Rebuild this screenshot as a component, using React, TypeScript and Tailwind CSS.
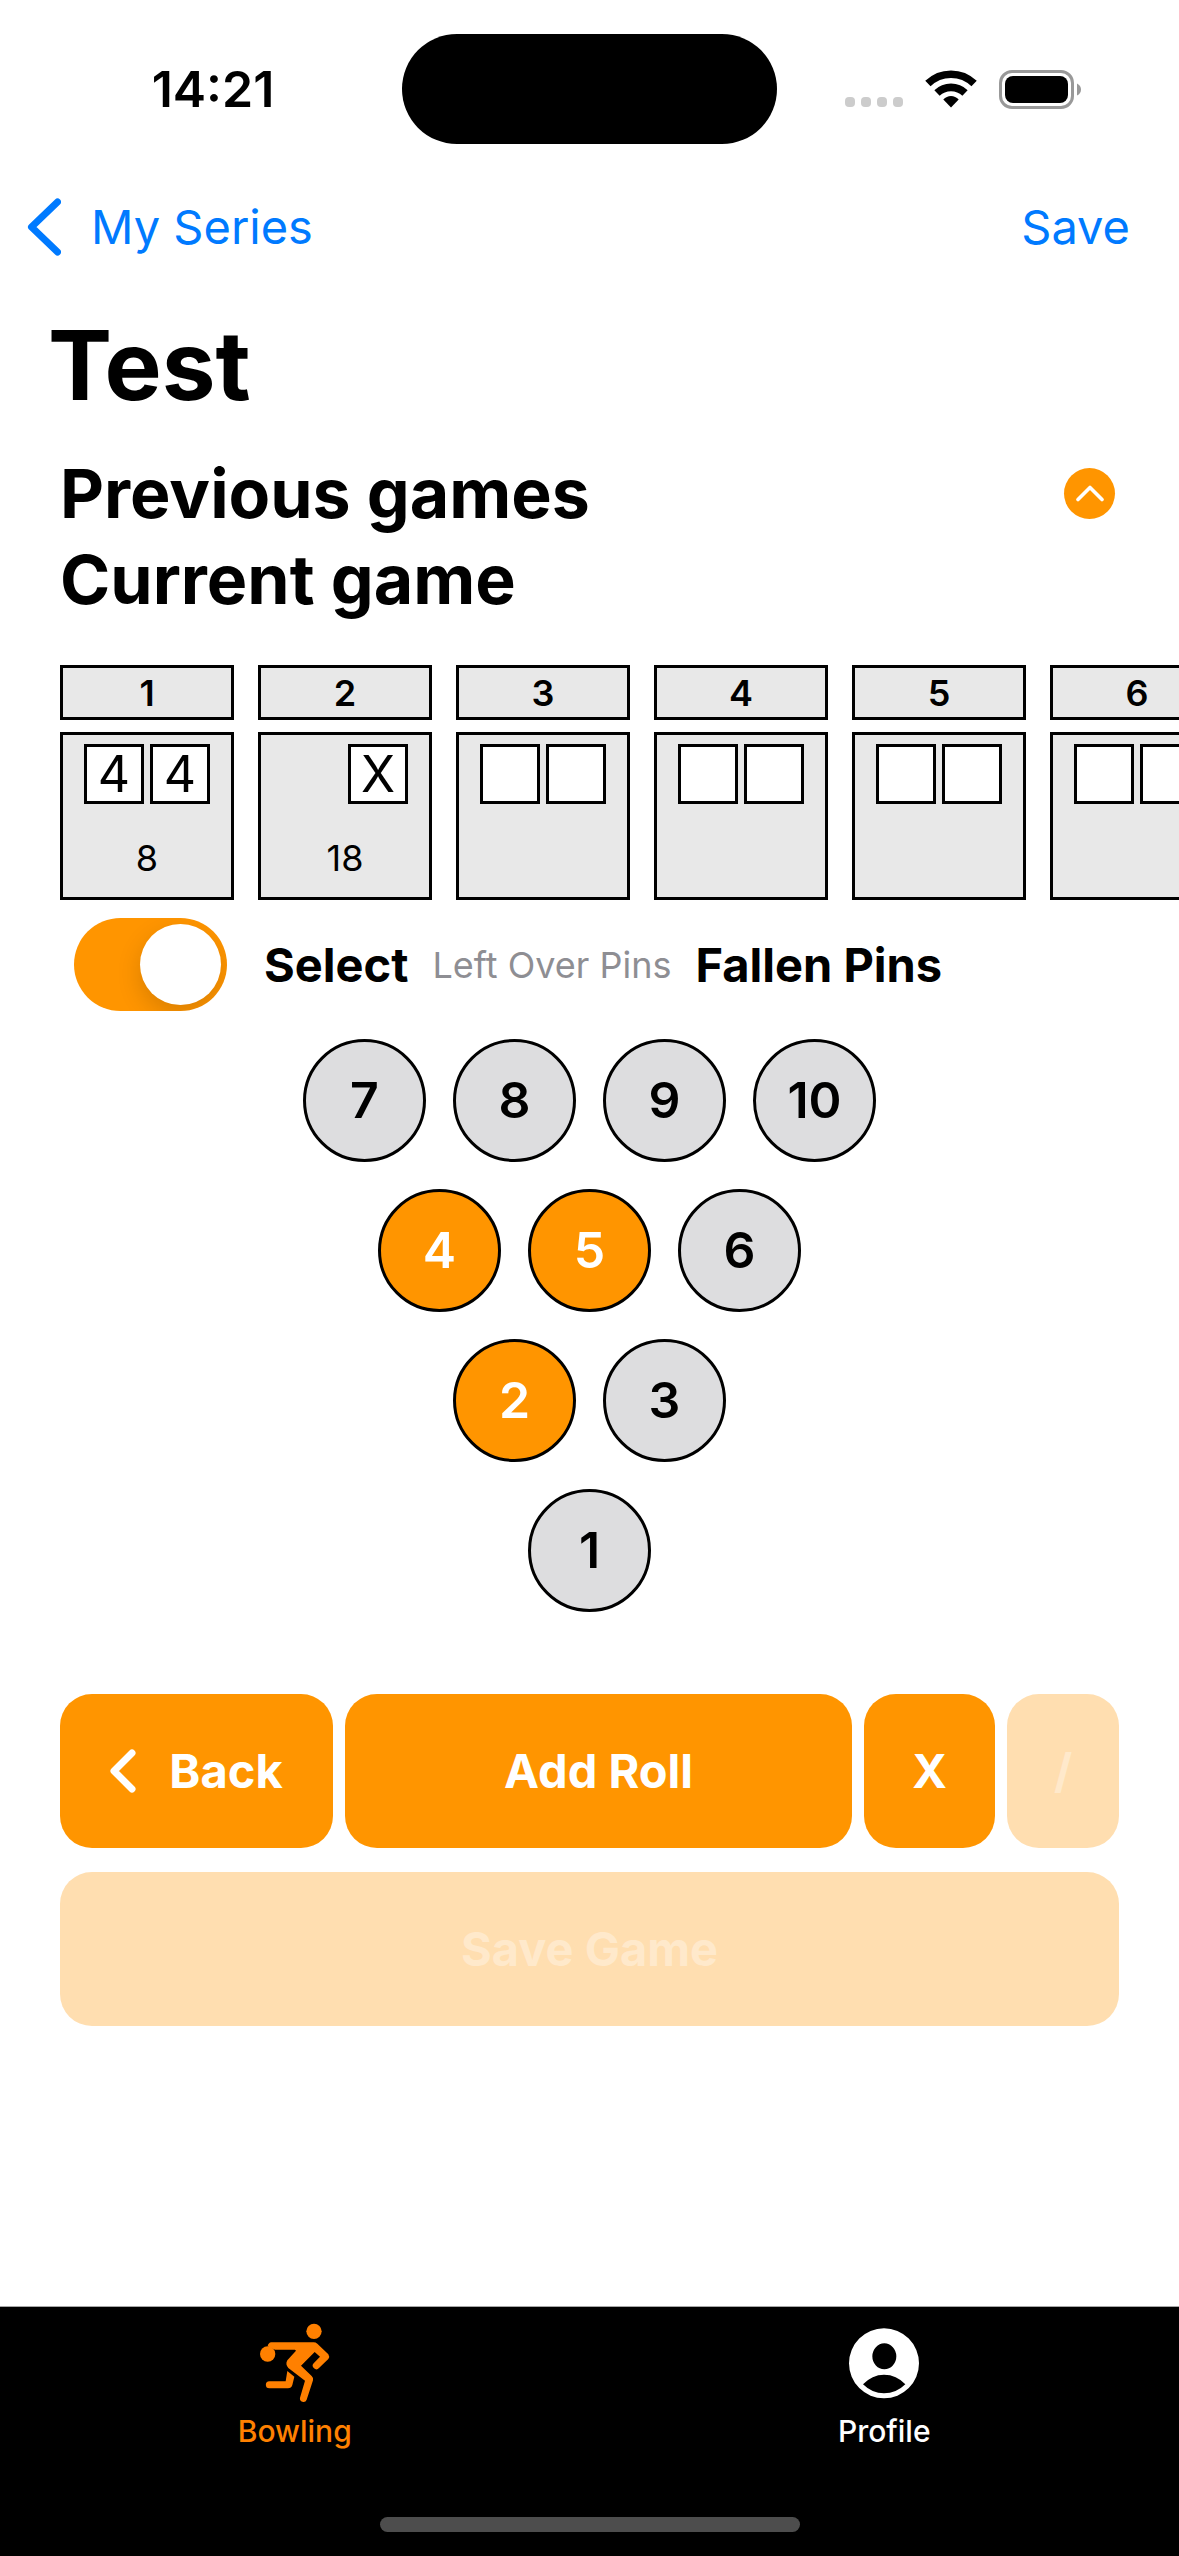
import { useState } from "react";

type Frame = { rolls: (string | null)[]; score: string };

const frames: Frame[] = [
  { rolls: ["4", "4"], score: "8" },
  { rolls: [null, "X"], score: "18" },
  { rolls: ["", ""], score: "" },
  { rolls: ["", ""], score: "" },
  { rolls: ["", ""], score: "" },
  { rolls: ["", ""], score: "" },
];

const pinRows = [[7, 8, 9, 10], [4, 5, 6], [2, 3], [1]];

function WifiIcon() {
  return (
    <svg viewBox="0 0 52 38" className="h-[38px] w-[52px]" fill="none" stroke="#000" strokeWidth="7.6" aria-hidden="true">
      <path d="M2.9 13.6A33.2 33.2 0 0 1 49.1 13.6" />
      <path d="M12 23A20.2 20.2 0 0 1 40 23" />
      <path d="M26 37.5L18.3 29.6Q21.6 26 26 26Q30.4 26 33.7 29.6Z" fill="#000" stroke="none" />
    </svg>
  );
}

function BatteryIcon() {
  return (
    <svg viewBox="0 0 82 39" className="h-[39px] w-[82px]" aria-hidden="true">
      <rect x="1.5" y="1.5" width="72" height="36" rx="11.5" fill="none" stroke="#999" strokeWidth="3" />
      <rect x="6" y="6" width="63" height="27" rx="8" fill="#000" />
      <path d="M78 13.5Q82 15.500 82 19.500Q82 23.500 78 25.500Z" fill="#999" />
    </svg>
  );
}

function StatusBar() {
  return (
    <div className="grid grid-cols-[1fr_375px_1fr] items-center pt-[34px]">
      <div className="pl-6 text-center text-[50px] leading-[60px] font-semibold">14:21</div>
      <div className="h-[110px] rounded-full bg-black" />
      <div className="flex items-center justify-end gap-[22px] pr-[98px]">
        <div className="mt-[26px] flex gap-[6px]">
          {[0, 1, 2, 3].map((n) => (
            <span key={n} className="size-[10px] rounded-[4px] bg-[#cccccc]" />
          ))}
        </div>
        <WifiIcon />
        <BatteryIcon />
      </div>
    </div>
  );
}

function NavBar() {
  return (
    <nav className="flex h-[166px] items-center justify-between pr-[49px] pl-[27px] text-[47px] leading-[60px] text-[#007aff]">
      <a href="#series" className="flex items-center gap-[30px]">
        <svg viewBox="0 0 34 58" className="h-[58px] w-[34px]" fill="none" stroke="currentColor" strokeWidth="7" strokeLinecap="round" strokeLinejoin="round" aria-hidden="true">
          <path d="M30.500 4L4.500 29L30.500 54" />
        </svg>
        My Series
      </a>
      <button type="button">Save</button>
    </nav>
  );
}

function FrameCard({ frame, number }: { frame: Frame; number: number }) {
  return (
    <li className="flex w-[174px] shrink-0 flex-col gap-3 text-center">
      <div className="flex h-[55px] items-center justify-center border-3 border-black bg-[#e8e8e8] text-[36px] font-semibold">
        {number}
      </div>
      <div className="flex h-[168px] flex-col border-3 border-black bg-[#e8e8e8] pt-[9px]">
        <div className="flex justify-center gap-[6px]">
          {frame.rolls.map((roll, i) =>
            roll === null ? (
              <span key={i} className="size-[60px]" />
            ) : (
              <span key={i} className="flex size-[60px] items-center justify-center border-3 border-black bg-white text-[50px] leading-none">
                {roll}
              </span>
            ),
          )}
        </div>
        <span className="mt-[30px] text-[36px] leading-[48px]">{frame.score}</span>
      </div>
    </li>
  );
}

function BowlerIcon() {
  return (
    <svg viewBox="180 98 216 240" className="h-[80px] w-[72px]" fill="currentColor" aria-hidden="true">
      <circle cx="345" cy="123" r="23" />
      <circle cx="206" cy="191" r="23" />
      <path d="M217 156H344Q350 156 355 160L388 192Q393 199 388 206L360 233A10.500 10.500 0 0 1 344 219L363 199L347 185L306 226L338 257Q344 262 342 270L323 328A10.500 10.500 0 0 1 303 322L318 271L268 233Q258 222 265 210L291 181L288 178H228L206 168Q208 157 217 156Z" />
      <path d="M265 242L260 273H211A10.500 10.500 0 0 0 211 294H267Q277 294 280 284L286 259Z" />
    </svg>
  );
}

function ProfileIcon() {
  return (
    <svg viewBox="203 98 216 240" className="h-[80px] w-[72px]" fill="currentColor" fillRule="evenodd" aria-hidden="true">
      <path d="M206 219a105 105 0 1 0 210 0a105 105 0 1 0 -210 0ZM276 198a36 39 0 1 1 72 0a36 39 0 1 1 -72 0ZM248 282Q275 253 311 253Q349 253 375 282Q348 309 311 309Q275 309 248 282Z" />
    </svg>
  );
}

const actionButton =
  "flex h-[154px] items-center justify-center rounded-[32px] bg-[#ff9500] text-[47px] font-bold text-white disabled:bg-[#ffdeb0] disabled:text-[#ffe9cb]";

export default function App() {
  const [fallen, setFallen] = useState(true);
  const [selected, setSelected] = useState([2, 4, 5]);
  const toggle = (pin: number) =>
    setSelected((pins) => (pins.includes(pin) ? pins.filter((p) => p !== pin) : [...pins, pin]));

  return (
    <div className="flex min-h-screen flex-col overflow-x-hidden bg-white font-['Inter',sans-serif] text-black">
      <StatusBar />
      <NavBar />
      <main className="flex flex-col">
        <h1 className="pl-12 text-[96px] leading-[110px] font-bold">Test</h1>

        <div className="mt-[30px] flex items-center justify-between pr-16 pl-[60px]">
          <h2 className="text-[68px] leading-[86px] font-bold">Previous games</h2>
          <button type="button" aria-label="Show previous games" className="flex size-[51px] items-center justify-center rounded-full bg-[#ff9500]">
            <svg viewBox="0 0 28 17" className="h-[17px] w-[28px]" fill="none" stroke="#fff" strokeWidth="3.600" strokeLinecap="round" strokeLinejoin="round" aria-hidden="true">
              <path d="M2 14.500L14 2.500L26 14.500" />
            </svg>
          </button>
        </div>
        <h2 className="pl-[60px] text-[68px] leading-[86px] font-bold">Current game</h2>

        <ol className="mt-[43px] flex gap-6 overflow-x-auto pl-[60px] [scrollbar-width:none]">
          {frames.map((frame, i) => (
            <FrameCard key={i} frame={frame} number={i + 1} />
          ))}
        </ol>

        <label className="mt-[18px] flex items-center pl-[74px] whitespace-nowrap">
          <input
            type="checkbox"
            role="switch"
            checked={fallen}
            onChange={(e) => setFallen(e.target.checked)}
            className="flex h-[93px] w-[153px] shrink-0 appearance-none items-center overflow-hidden rounded-full bg-[#e9e9ea] px-[6px] before:size-[81px] before:rounded-full before:bg-white before:shadow-[0_9px_24px_rgba(0,0,0,0.15)] checked:justify-end checked:bg-[#ff9500]"
          />
          <span className="ml-[37px] text-[47px] leading-[60px] font-bold">Select</span>
          <span className="ml-6 text-[36px] leading-[60px] text-[#8e8e93]">Left Over Pins</span>
          <span className="ml-6 text-[47px] leading-[60px] font-bold">Fallen Pins</span>
        </label>

        <div className="mt-7 flex flex-col gap-[27px]">
          {pinRows.map((row) => (
            <div key={row[0]} className="flex justify-center gap-[27px]">
              {row.map((pin) => (
                <button
                  key={pin}
                  type="button"
                  aria-pressed={selected.includes(pin)}
                  onClick={() => toggle(pin)}
                  className="size-[123px] rounded-full border-3 border-black bg-[#dddddf] text-[50px] font-semibold aria-pressed:bg-[#ff9500] aria-pressed:text-white"
                >
                  {pin}
                </button>
              ))}
            </div>
          ))}
        </div>

        <div className="mt-[82px] flex flex-col gap-6 px-[60px]">
          <div className="flex gap-3">
            <button type="button" className={`${actionButton} w-[273px] gap-[33px]`}>
              <svg viewBox="0 0 26 44" className="h-[44px] w-[26px]" fill="none" stroke="currentColor" strokeWidth="7" strokeLinecap="round" strokeLinejoin="round" aria-hidden="true">
                <path d="M22 4L4 22L22 40" />
              </svg>
              Back
            </button>
            <button type="button" className={`${actionButton} flex-1`}>Add Roll</button>
            <button type="button" className={`${actionButton} w-[131px]`}>X</button>
            <button type="button" disabled className={`${actionButton} w-[112px]`}>/</button>
          </div>
          <button type="button" disabled className={actionButton}>Save Game</button>
        </div>
      </main>

      <footer className="mt-auto flex h-[250px] flex-col border-t border-[#a6a6a6] bg-black text-[30px] leading-9 font-medium">
        <div className="grid grid-cols-2 pt-4">
          <a href="#bowling" className="flex flex-col items-center gap-[10px] text-[#ff8000]">
            <BowlerIcon />
            Bowling
          </a>
          <a href="#profile" className="flex flex-col items-center gap-[10px] text-white">
            <ProfileIcon />
            Profile
          </a>
        </div>
        <div className="mx-auto mt-auto mb-6 h-[15px] w-[420px] rounded-full bg-[#4d4d4d]" />
      </footer>
    </div>
  );
}
